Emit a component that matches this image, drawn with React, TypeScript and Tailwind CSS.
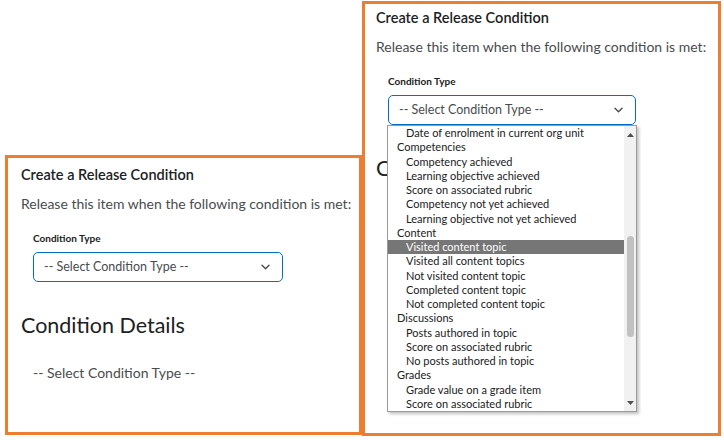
import React from "react";

const items: { label: string; group?: boolean; selected?: boolean }[] = [
  { label: "Date of enrolment in current org unit" },
  { label: "Competencies", group: true },
  { label: "Competency achieved" },
  { label: "Learning objective achieved" },
  { label: "Score on associated rubric" },
  { label: "Competency not yet achieved" },
  { label: "Learning objective not yet achieved" },
  { label: "Content", group: true },
  { label: "Visited content topic", selected: true },
  { label: "Visited all content topics" },
  { label: "Not visited content topic" },
  { label: "Completed content topic" },
  { label: "Not completed content topic" },
  { label: "Discussions", group: true },
  { label: "Posts authored in topic" },
  { label: "Score on associated rubric" },
  { label: "No posts authored in topic" },
  { label: "Grades", group: true },
  { label: "Grade value on a grade item" },
  { label: "Score on associated rubric" },
];

function Chevron() {
  return (
    <svg width="9" height="6" viewBox="0 0 9 6" fill="none">
      <path d="M1 1.2l3.5 3.5 3.5-3.5" stroke="#494c4e" strokeWidth="1.4" strokeLinecap="round" strokeLinejoin="round" />
    </svg>
  );
}

function Dropdown() {
  return (
    <div className="absolute left-[-1px] top-[30px] w-[250px] h-[287px] bg-white border border-[#9a9a9a] shadow-[2px_2px_3px_rgba(0,0,0,0.25)] flex z-10">
      <div className="flex-1 flex flex-col overflow-hidden">
        {items.map((it, i) => (
          <div
            key={i}
            className={`h-[14.25px] leading-[14.25px] text-[11px] whitespace-nowrap shrink-0 ${
              it.group ? "pl-[9px]" : "pl-[18px]"
            } ${it.selected ? "bg-[#767676] text-white" : "text-[#202122]"}`}
          >
            {it.label}
          </div>
        ))}
      </div>
      <div className="w-[12px] bg-[#f1f1f1] flex flex-col items-center">
        <div className="h-[14px] flex items-center justify-center pt-[3px]">
          <svg width="7" height="4" viewBox="0 0 7 4">
            <path d="M0 4L3.5 0 7 4z" fill="#505050" />
          </svg>
        </div>
        <div className="h-[96px]" />
        <div className="w-[7px] h-[101px] rounded-[4px] bg-[#c1c1c1]" />
        <div className="flex-1" />
        <div className="h-[14px] flex items-center justify-center pb-[3px]">
          <svg width="7" height="4" viewBox="0 0 7 4">
            <path d="M0 0L3.5 4 7 0z" fill="#505050" />
          </svg>
        </div>
      </div>
    </div>
  );
}

function Panel({ open, pt, pl, selW }: { open?: boolean; pt: string; pl: string; selW: string }) {
  return (
    <div className={`flex flex-col ${pt} ${pl}`}>
      <div className="text-[14.5px] leading-[20px] font-semibold text-[#202122]">Create a Release Condition</div>
      <div className="mt-[9px] text-[14px] leading-[20px] text-[#494c4e] whitespace-nowrap">
        Release this item when the following condition is met:
      </div>
      <div className="mt-[18px] pl-[12px] flex flex-col">
        <div className="text-[10px] leading-[13px] font-bold text-[#202122]">Condition Type</div>
        <div className={`relative mt-[7px] ${selW}`}>
          <div className="h-[30px] border border-[#006fbf] rounded-[5px] flex items-center justify-between pl-[10px] pr-[12px] text-[12.5px] text-[#494c4e]">
            <span>-- Select Condition Type --</span>
            <Chevron />
          </div>
          {open && <Dropdown />}
        </div>
      </div>
      <div className="mt-[29px] text-[21.5px] leading-[28px] text-[#202122]">Condition Details</div>
      <div className="mt-[24px] pl-[12px] text-[14px] leading-[20px] text-[#494c4e]">-- Select Condition Type --</div>
    </div>
  );
}

export default function App() {
  return (
    <div
      className="w-[724px] h-[440px] bg-white flex items-start pl-[5px] pt-[1px] overflow-hidden"
      style={{ fontFamily: "Lato, 'Noto Sans', sans-serif" }}
    >
      <div className="mt-[154px] w-[357px] h-[280px] border-[3px] border-[#ED7D31] shrink-0">
        <Panel pt="pt-[7px]" pl="pl-[13px]" selW="w-[250px]" />
      </div>
      <div className="w-[359px] h-[435px] border-[3px] border-[#ED7D31] shrink-0">
        <Panel open pt="pt-[4px]" pl="pl-[11px]" selW="w-[248px]" />
      </div>
    </div>
  );
}
